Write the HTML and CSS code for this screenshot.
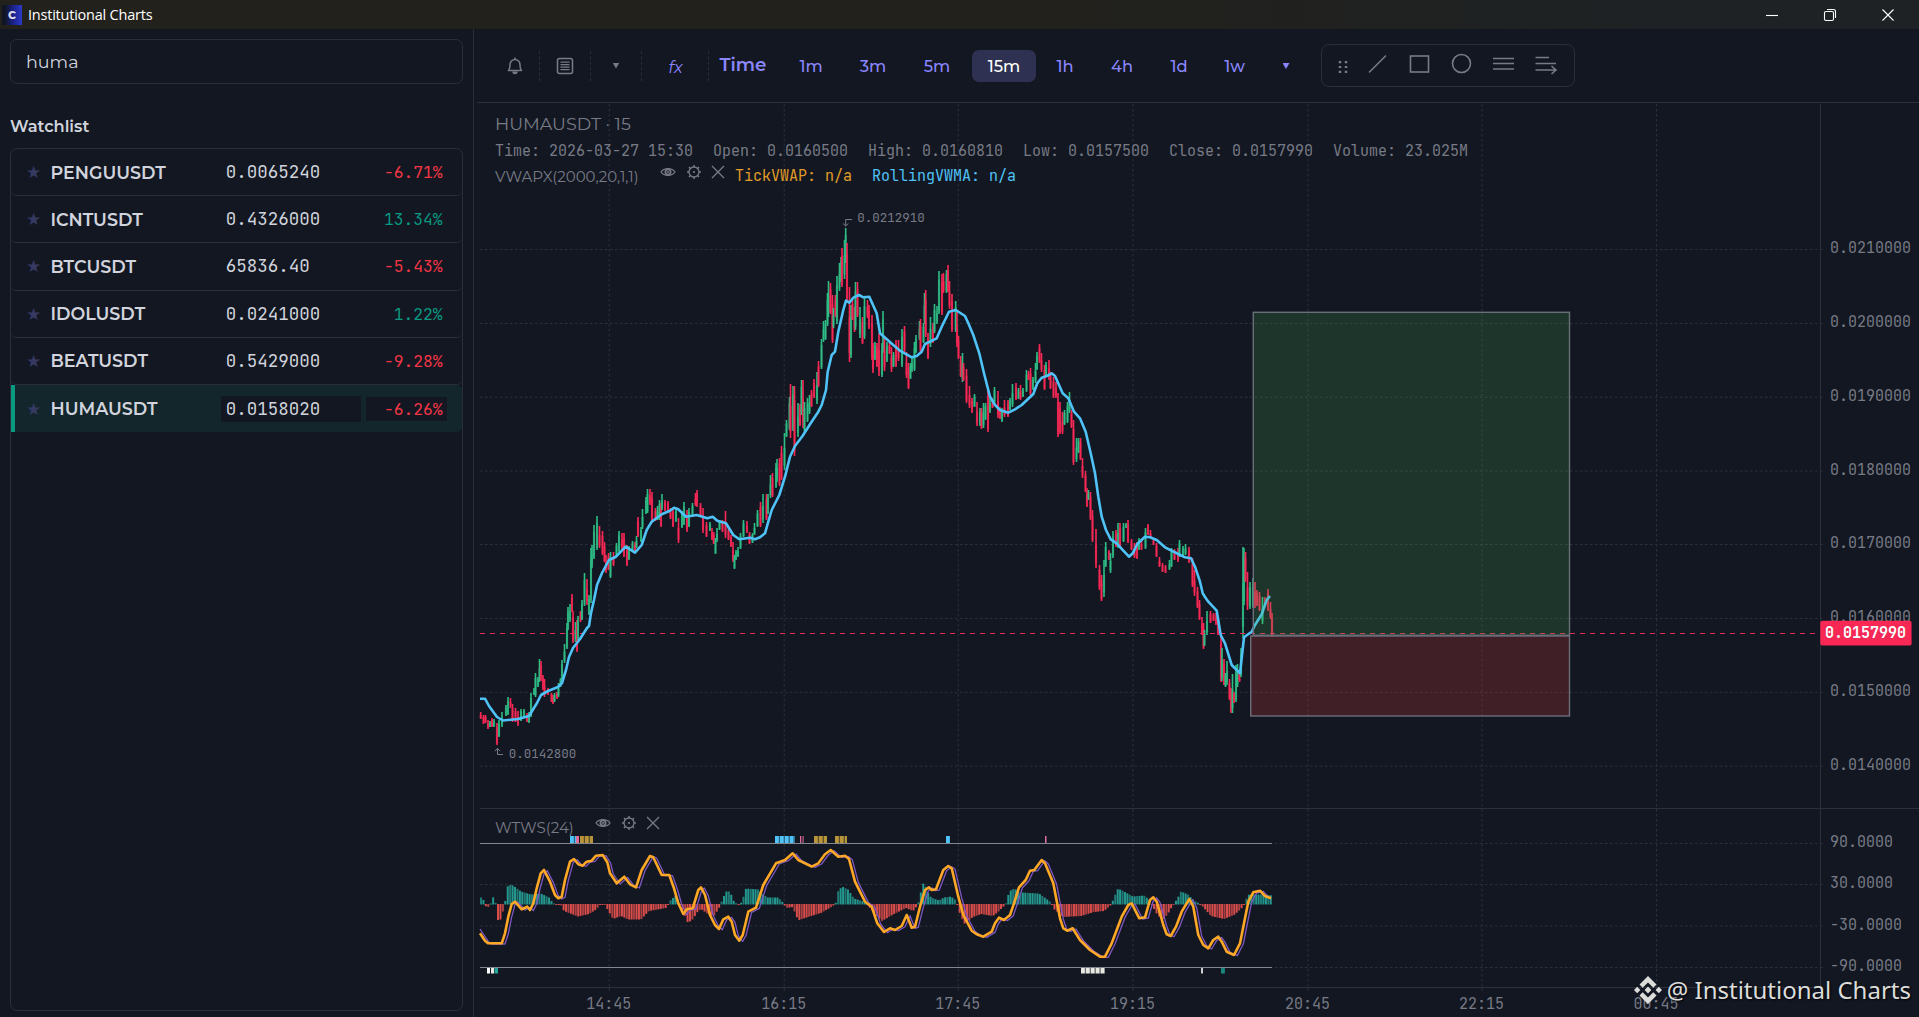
FILE: index.html
```
<!DOCTYPE html>
<html lang="en">
<head>
  <meta charset="UTF-8"/>
  <title>Institutional Charts</title>
  <link rel="stylesheet" href="styles.css">
</head>

<body>
<svg class="defs" width="0" height="0">
  <symbol id="eye" viewBox="0 0 16 12">
    <path d="M1 6C4 1.500 12 1.500 15 6C12 10.500 4 10.500 1 6Z" fill="none" stroke="currentColor" stroke-width="1.300"/>
    <circle cx="8" cy="6" r="2.600" fill="none" stroke="currentColor" stroke-width="1.800"/>
    <circle cx="8" cy="6" r="1" fill="currentColor"/>
  </symbol>
  <symbol id="gear" viewBox="0 0 14 14">
    <circle cx="7" cy="7" r="5" fill="none" stroke="currentColor" stroke-width="1.300"/>
    <circle cx="7" cy="7" r="1.100" fill="currentColor"/>
    <path d="M7 0V2M7 12V14M0 7H2M12 7H14M2 2L3.400 3.400M10.600 10.600L12 12M2 12L3.400 10.600M10.600 3.400L12 2" stroke="currentColor" stroke-width="1.400"/>
  </symbol>
  <symbol id="cross" viewBox="0 0 14 14">
    <path d="M1 1L13 13M13 1L1 13" stroke="currentColor" stroke-width="1.300"/>
  </symbol>
</svg>

<header class="titlebar">
  <span class="app-icon">C</span>
  <span class="app-title">Institutional Charts</span>
  <div class="window-controls">
    <svg viewBox="0 0 14 14"><path d="M1 7.500H13"/></svg>
    <svg viewBox="0 0 14 14"><rect x="1.500" y="3.500" width="9" height="9" rx="1.500"/><path d="M4 1.500H10.500Q12.500 1.500 12.500 3.500V10"/></svg>
    <svg viewBox="0 0 14 14"><path d="M1.500 1.500L12.500 12.500M12.500 1.500L1.500 12.500"/></svg>
  </div>
</header>

<div class="layout">
  <aside class="sidebar">
    <input class="search" type="text" value="huma"/>
    <h2>Watchlist</h2>
    <div class="watchlist">
      <div class="row"><span class="star">★</span><span class="symbol">PENGUUSDT</span><span class="price">0.0065240</span><span class="change down">-6.71%</span></div>
      <div class="row"><span class="star">★</span><span class="symbol">ICNTUSDT</span><span class="price">0.4326000</span><span class="change up">13.34%</span></div>
      <div class="row"><span class="star">★</span><span class="symbol">BTCUSDT</span><span class="price">65836.40</span><span class="change down">-5.43%</span></div>
      <div class="row"><span class="star">★</span><span class="symbol">IDOLUSDT</span><span class="price">0.0241000</span><span class="change up">1.22%</span></div>
      <div class="row"><span class="star">★</span><span class="symbol">BEATUSDT</span><span class="price">0.5429000</span><span class="change down">-9.28%</span></div>
      <div class="row active"><span class="star">★</span><span class="symbol">HUMAUSDT</span><span class="price">0.0158020</span><span class="change down">-6.26%</span></div>
    </div>
  </aside>

  <main class="workspace">
    <nav class="toolbar">
      <div class="tools">
        <span class="tool"><svg width="18" height="20" viewBox="0 0 18 20"><path d="M2.500 14.500H15.500C13.800 12.500 14 11 14 8.500A5 5 0 0 0 4 8.500C4 11 4.200 12.500 2.500 14.500ZM9 3.500V2" fill="none" stroke="currentColor" stroke-width="1.500" stroke-linejoin="round" stroke-linecap="round"/><path d="M6.300 15.500H11.700A2.700 2.700 0 0 1 6.300 15.500Z" fill="currentColor"/></svg></span>
        <span class="tool"><svg width="18" height="18" viewBox="0 0 18 18"><rect x="1.500" y="1.500" width="15" height="15" rx="2" fill="none" stroke="currentColor" stroke-width="1.500"/><path d="M4.500 5.200H13.500M4.500 7.700H13.500M4.500 10.200H13.500M4.500 12.700H13.500" stroke="currentColor" stroke-width="1.200"/></svg></span>
        <span class="tool"><i class="caret"></i></span>
        <span class="tool fx">fx</span>
      </div>
      <div class="intervals">
        <strong>Time</strong>
        <span>1m</span><span>3m</span><span>5m</span><span class="selected">15m</span><span>1h</span><span>4h</span><span>1d</span><span>1w</span><span><i class="caret"></i></span>
      </div>
      <div class="drawing">
        <svg width="252" height="42" viewBox="1322 45 252 42" fill="none" stroke="currentColor" stroke-width="1.600">
          <path d="M1340 61V73M1346 61V73" stroke-width="2.500" stroke-dasharray="2.200 2.700"/>
          <path d="M1369 72.500L1386 55.500"/>
          <rect x="1410.500" y="56" width="18" height="16"/>
          <circle cx="1461.500" cy="63.500" r="9"/>
          <path d="M1493 58.500H1514M1493 63.500H1514M1493 69H1514"/>
          <path d="M1535.500 57.500H1549M1535.500 63.500H1556M1535.500 70H1556M1551.500 66L1556 70L1551.500 74"/>
        </svg>
      </div>
    </nav>

    <section class="chart">
      <svg id="chart" viewBox="474 103 1445 914" width="1445" height="914"></svg>
      <div class="legend">
        <div class="pair">HUMAUSDT · 15</div>
        <div class="ohlc"><span>Time: 2026-03-27 15:30</span><span>Open: 0.0160500</span><span>High: 0.0160810</span><span>Low: 0.0157500</span><span>Close: 0.0157990</span><span>Volume: 23.025M</span></div>
        <div class="indicator">
          <span class="ind-name">VWAPX(2000,20,1,1)</span>
          <svg class="eye"><use href="#eye"/></svg><svg class="gear"><use href="#gear"/></svg><svg class="cross"><use href="#cross"/></svg>
          <span class="tick">TickVWAP: n/a</span><span class="rolling">RollingVWMA: n/a</span>
        </div>
      </div>
      <div class="legend legend-sub">
        <div class="indicator">
          <span class="ind-name">WTWS(24)</span>
          <svg class="eye"><use href="#eye"/></svg><svg class="gear"><use href="#gear"/></svg><svg class="cross"><use href="#cross"/></svg>
        </div>
      </div>
      <div class="watermark">
        <svg width="28" height="28" viewBox="0 0 28 28"><path d="M14 0L22.500 8.500L19.300 11.700L14 6.400L8.700 11.700L5.500 8.500ZM14 28L22.500 19.500L19.300 16.300L14 21.600L8.700 16.300L5.500 19.500ZM14 10.600L17.400 14L14 17.400L10.600 14ZM3.200 10.800L6.400 14L3.200 17.200L0 14ZM24.800 10.800L28 14L24.800 17.200L21.600 14Z" fill="currentColor"/></svg>
        <span>@ Institutional Charts</span>
      </div>
    </section>
  </main>
</div>
<script src="chart.js"></script>
</body>
</html>
```
FILE: styles.css
```
* {
  box-sizing: border-box;
}

body {
  margin: 0;
  height: 100vh;
  overflow: hidden;
  display: flex;
  flex-direction: column;
  background: #131722;
  color: #d1d4dc;
  font-family: Montserrat, Inter, sans-serif;
}

.defs {
  position: absolute;
}

/* title bar */
.titlebar {
  height: 29px;
  flex-shrink: 0;
  display: flex;
  align-items: center;
  background: linear-gradient(90deg, #22211c 0%, #22211c 55%, #1e2224 85%);
  color: #fff;
}

.app-icon {
  width: 20px;
  height: 20px;
  margin: 0 6px 0 2px;
  background: linear-gradient(90deg, #101525 15%, #1c2390 60%, #2b3cc8);
  color: #d8d8ee;
  font-size: 11px;
  font-weight: 800;
  line-height: 20px;
  text-align: center;
}

.app-title {
  font-family: "Segoe UI", "Open Sans", sans-serif;
  font-size: 14.500px;
  letter-spacing: -0.220px;
}

.window-controls {
  display: flex;
  margin-left: auto;
}

.window-controls svg {
  width: 14px;
  height: 14px;
  margin: 0 22px;
  fill: none;
  stroke: #fff;
  stroke-width: 1.100;
}

.window-controls svg:last-child {
  margin-right: 24px;
}

.layout {
  flex: 1;
  display: flex;
  min-height: 0;
}

/* sidebar */
.sidebar {
  width: 474px;
  border-right: 1px solid #2a2e39;
  padding: 10px 10px 6px;
  display: flex;
  flex-direction: column;
}

.search {
  height: 45px;
  flex-shrink: 0;
  padding: 0 15px;
  background: transparent;
  border: 1px solid #2a2e39;
  border-radius: 7px;
  color: #d1d4dc;
  font-family: inherit;
  font-size: 17.500px;
}

.sidebar h2 {
  margin: 32px 0 0;
  height: 32px;
  font-size: 16.250px;
  font-weight: 600;
  line-height: 21px;
}

.watchlist {
  flex: 1;
  border: 1px solid #2a2e39;
  border-radius: 7px;
}

.row {
  display: flex;
  align-items: center;
  height: 47.200px;
  padding: 0 15px 0 15px;
  border-bottom: 1px solid #2a2e39;
  border-radius: 5px;
}

.row.active {
  background: #12262b;
  border-bottom: none;
  box-shadow: inset 4px 0 #089981;
  border-radius: 0 5px 5px 0;
}

.star {
  width: 24.500px;
  color: #363a62;
  font-family: "DejaVu Sans", sans-serif;
  font-size: 17px;
}

.symbol {
  width: 171px;
  font-size: 17.500px;
  font-weight: 600;
}

.price,
.change {
  font-family: "JetBrains Mono", "DejaVu Sans Mono", monospace;
}

.price {
  width: 140px;
  height: 26px;
  margin-right: 5px;
  padding-left: 4.500px;
  font-size: 17.500px;
  line-height: 26px;
}

.change {
  width: 81px;
  height: 24px;
  padding-right: 4.500px;
  font-size: 16.250px;
  line-height: 24px;
  text-align: right;
}

.active .price,
.active .change {
  background: #131722;
}

.up {
  color: #089981;
}

.down {
  color: #f23645;
}

/* toolbar */
.workspace {
  width: 1445px;
}

.toolbar {
  display: flex;
  height: 74px;
  margin-left: 3px;
  padding-top: 15px;
  border-bottom: 1px solid #2a2e39;
  color: #787b86;
}

.tools {
  display: grid;
  grid-template-columns: 51px 51px 51px 67px;
  height: 30px;
  margin: 7px 0 0 12px;
}

.tool {
  display: flex;
  align-items: center;
  justify-content: center;
  border-right: 1px dashed #2a2e39;
}

.tool:first-child {
  padding-left: 2px;
}

.fx {
  color: #8a86ff;
  font-size: 16.250px;
  font-style: italic;
  padding: 1px 0 0 1px;
}

.caret {
  width: 7px;
  height: 6px;
  background: currentColor;
  clip-path: polygon(0 0, 100% 0, 50% 100%);
}

.tool .caret {
  margin-bottom: 1px;
}

.intervals {
  display: grid;
  grid-template-columns: 71px 62px 62px 66px 68px 54px 60px 54px 57px 46px;
  height: 32px;
  margin-top: 6px;
  color: #8a86ff;
  font-size: 16.250px;
  font-weight: 500;
}

.intervals strong {
  padding-left: 10.500px;
  font-size: 18.300px;
  font-weight: 600;
  line-height: 30px;
}

.intervals span {
  display: flex;
  align-items: center;
  justify-content: center;
}

.intervals .selected {
  margin: 0 2px;
  background: #2f3152;
  border-radius: 7px;
  color: #fff;
}

.drawing {
  width: 254px;
  height: 43px;
  margin-left: 12px;
  border: 1px solid #2a2e39;
  border-radius: 8px;
}

.drawing svg {
  display: block;
}

/* chart */
.chart {
  position: relative;
  height: 914px;
}

#chart {
  display: block;
}

#chart text {
  font-family: "JetBrains Mono", "DejaVu Sans Mono", monospace;
}

.legend {
  position: absolute;
  left: 21px;
  top: 10px;
  color: #787b86;
}

.legend-sub {
  top: 710px;
}

.pair {
  height: 26px;
  font-size: 17.500px;
  font-weight: 400;
  line-height: 22px;
}

.ohlc {
  display: flex;
  gap: 20px;
  height: 24px;
  font-family: "JetBrains Mono", "DejaVu Sans Mono", monospace;
  font-size: 15px;
  line-height: 24px;
}

.indicator {
  display: flex;
  align-items: center;
  height: 26px;
  font-family: "JetBrains Mono", "DejaVu Sans Mono", monospace;
  font-size: 15px;
}

.ind-name {
  width: 165px;
  font-family: Montserrat, Inter, sans-serif;
  font-size: 15px;
  font-weight: 400;
}

.legend-sub .ind-name {
  width: 100px;
  padding-top: 2px;
}

.indicator svg {
  height: 14px;
  margin-bottom: 8px;
}

.legend-sub .indicator svg {
  margin-bottom: 6px;
}

.indicator .eye {
  width: 16px;
  margin-right: 11px;
}

.indicator .gear {
  width: 14px;
  margin-right: 10px;
}

.indicator .cross {
  width: 14px;
  margin-right: 10px;
}

.tick {
  color: #e09c28;
  margin-right: 20px;
}

.rolling {
  color: #4fc3f7;
}

.watermark {
  position: absolute;
  right: 8px;
  bottom: 8px;
  display: flex;
  align-items: center;
  gap: 5px;
  color: #dcdddb;
  font-family: "Noto Sans", sans-serif;
  font-size: 24px;
  line-height: 38px;
  text-shadow: 1px 1px 2px #000;
}
```
FILE: chart.js
```
const svg = document.getElementById("chart");
let out = "";

const line = (x1, y1, x2, y2, color, extra = "") => {
  out += `<line x1="${x1}" y1="${y1}" x2="${x2}" y2="${y2}" stroke="${color}" ${extra}/>`;
};
const rect = (x, y, w, h, fill, extra = "") => {
  out += `<rect x="${x}" y="${y}" width="${w}" height="${h}" fill="${fill}" ${extra}/>`;
};
const text = (x, y, str, size, color = "#787b86", extra = "") => {
  out += `<text x="${x}" y="${y}" font-size="${size}" fill="${color}" ${extra}>${str}</text>`;
};
const pairs = (str) => str.trim().split(/\s+/).map((p) => p.split(",").map(Number));
const poly = (pts, color, width) => {
  out += `<polyline points="${pts.join(" ")}" fill="none" stroke="${color}" stroke-width="${width}" stroke-linejoin="round"/>`;
};

// grid
const GRID = "#2c303b";
const DASH = 'stroke-dasharray="2.5 2.5"';
const times = [[609.2, "14:45"], [784.2, "16:15"], [958.2, "17:45"], [1133, "19:15"], [1308, "20:45"], [1482, "22:15"], [1656.5, "00:45"]];
const prices = [[249.5, "0.0210000"], [323.5, "0.0200000"], [397.2, "0.0190000"], [471, "0.0180000"], [544.5, "0.0170000"], [618.5, "0.0160000"], [692.4, "0.0150000"], [766.2, "0.0140000"]];
const levels = [[843.5, "90.0000"], [884.5, "30.0000"], [926, "-30.0000"], [967.5, "-90.0000"]];

times.forEach(([x]) => {
  line(x, 104, x, 987, GRID, DASH);
  line(x, 987, x, 991, GRID);
});
prices.concat(levels).forEach(([y]) => line(480, y, 1825, y, GRID, DASH));
line(480, 808.5, 1919, 808.5, GRID);
line(480, 987.5, 1820, 987.5, GRID);
line(1820.5, 104, 1820.5, 987, GRID);

// candles: x, high, low, 1 = up
const candles = pairs(`
480.7,712,719,0 483.5,715,724,0 485.5,715,723,0 488,720,729,0 490,721,727,1 492,718,727,0 494,719,727,1 497,723,745,0 499,720,737,1 502,712,727,1
506,705,716,1 508,697,715,1 510.5,698,708,0 512.5,704,722,0 515.5,708,722,0 518,711,726,0 521,709,721,1 524,709,718,1 527,713,722,0 529,712,723,1
531,693,717,1 534,688,695,1 535.5,673,697,1 538,677,687,1 539.5,659,682,1 541,661,681,0 543,675,690,0 544.5,679,697,0 548,688,695,0 551.5,693,702,0
553,695,704,0 554.5,693,702,1 557,692,699,0 558.5,683,697,1 560.5,678,687,1 562,660,680,1 564.5,644,663,1 567,623,649,1 568,607,630,1 570,604,622,1
572,594,612,0 573,611,643,0 575.5,622,642,1 577,620,652,0 578,616,640,1 580.5,611,622,0 582,600,620,1 584.5,573,606,1 587,579,605,0 589,595,615,1
591,548,603,1 592,545,568,1 594,525,559,1 597,516,550,1 599.5,526,548,0 602.5,531,555,0 604.5,542,562,0 606,555,573,0 608.5,553,570,0 610.5,552,578,1
613.5,552,566,0 616.5,543,557,1 619,531,552,1 622,533,550,0 624,533,557,0 627,545,566,0 629,546,560,1 632.5,541,552,1 635,542,551,0 636.5,536,548,1
638,517,537,0 641,527,542,1 642.5,509,529,1 646,497,514,1 647.5,489,513,1 650,489,505,0 652,492,523,0 655.5,508,521,0 657.5,506,520,1 659.5,500,520,1
661,503,527,0 662,494,510,1 665,500,511,0 668,501,513,0 670.5,508,519,0 673,508,527,0 676,508,522,1 678.5,518,543,0 682,511,528,1 684,502,525,1
687,510,532,0 689,508,527,1 692.5,503,517,1 695.5,493,506,0 697,490,507,0 700.5,503,517,0 703,508,533,0 706.5,522,537,0 710,522,531,1 712,528,540,0
713.7,532,544,0 715.5,538,554,1 717,528,542,1 719.5,520,530,1 722.5,520,532,0 725.5,511,538,0 728.5,528,540,0 731,535,547,0 733,542,562,0 734.5,555,569,1
736,550,560,1 738,547,557,1 740.5,533,549,1 743.5,520,537,1 747,521,533,0 749.5,532,544,0 752.5,533,543,1 754.5,523,535,1 757.5,510,527,1 760.5,502,527,0
763,494,523,1 766.5,494,520,0 768,494,514,1 770.5,475,498,1 772.5,473,497,0 776,463,488,1 777,459,482,1 779.5,458,486,0 781.5,446,480,0 784.5,433,470,1
786.5,420,437,1 789.5,397,430,1 790.5,384,438,0 793,386,431,1 794.5,386,456,0 798,403,437,1 800,404,426,0 801.5,380,415,1 803,380,428,0 804.5,402,432,1
807.5,398,422,1 809.5,395,414,1 811.5,390,407,0 814,379,398,0 817,372,404,1 818.5,361,387,0 821.5,339,369,1 823.5,321,342,1 825.5,320,340,1 827.5,293,326,1
828.5,281,317,1 830.5,283,314,0 832.5,295,343,0 833.5,308,328,1 835.5,295,317,0 837,276,324,1 839.5,263,291,1 841,257,282,1 842,248,287,0 844.5,240,279,1
845.7,228,263,1 847,243,302,0 849.5,287,362,0 851,305,358,1 852.5,300,320,0 854.5,307,332,0 855.5,282,330,1 857.5,282,317,0 860,307,338,1 862.5,317,344,0
864.5,298,339,1 867.5,300,318,0 869,305,329,0 872,315,360,0 873,343,373,0 875,342,360,1 877,343,367,0 879,333,376,0 882,343,377,1 883,311,353,1
884.5,337,371,0 887,342,362,1 889.5,343,354,0 891.5,347,372,0 893.5,352,367,1 896,340,367,0 898.5,340,361,0 902,329,367,1 904.5,326,352,0 906.5,352,378,0
908.5,363,389,0 910.5,363,379,1 912,357,372,1 914.5,342,371,1 916,335,353,1 919.5,321,340,1 920.5,319,352,0 923.5,323,343,1 924.5,293,324,1 925.7,290,337,0
928,333,359,0 930.5,317,347,1 933,323,343,0 934.5,304,333,1 937,306,324,1 939,271,314,1 942,274,315,0 943.5,273,293,0 946.5,270,293,1 948,265,292,0
949.5,281,309,0 952,294,332,0 955.7,301,332,1 957,312,347,0 958.5,336,359,0 960.7,356,377,0 962.5,353,382,1 963.5,363,381,0 966.5,369,403,0 969.5,386,408,0
972,398,413,0 974.5,394,407,1 977,402,426,0 980,408,426,1 981.5,408,429,0 983.5,403,428,1 985.5,403,420,1 988,387,432,0 990,397,413,1 992.5,398,408,0
994.5,387,403,1 998,391,418,0 1000,407,419,0 1002,408,422,1 1004.5,400,417,0 1008,400,417,0 1010,398,410,1 1012.5,384,407,1 1016,383,400,0 1018.5,388,399,1
1020.5,385,400,0 1023,388,397,1 1026.5,370,392,1 1028.5,371,380,0 1030.5,368,395,0 1033,377,390,1 1035.5,363,383,1 1037,352,370,1 1039.5,344,363,0 1041.5,353,372,0
1044.5,365,390,0 1046,362,377,1 1049,360,380,0 1050.5,372,389,0 1053.5,377,398,0 1056,382,398,0 1058,393,437,0 1060,402,434,0 1062.5,412,434,0 1064.5,410,425,1
1067.5,402,423,1 1069.5,392,413,1 1071.5,410,428,0 1073.5,420,465,0 1076.5,438,462,1 1078.5,438,453,1 1080.5,438,460,0 1082.5,458,478,0 1085.5,471,492,0 1087,488,507,0
1088.5,490,500,1 1090.5,492,520,0 1092.5,510,542,0 1096,529,568,0 1099.5,565,590,0 1101.5,575,601,0 1104,560,597,1 1105.7,542,567,1 1109,550,560,0 1110.5,553,573,1
1113,531,558,1 1116,530,547,0 1118,523,548,1 1120,523,547,0 1123.5,523,542,1 1126,523,528,1 1128,520,543,0 1131.5,539,550,0 1134.5,543,558,0 1137,542,559,0
1139,538,550,1 1141.5,540,550,0 1145.5,528,549,1 1148,524,535,0 1150.5,530,538,0 1153.5,540,545,0 1156.5,543,557,0 1159.5,557,567,0 1162.5,563,572,0 1165.5,565,573,0
1169.5,560,570,1 1171.5,548,567,1 1174.5,549,560,0 1178,548,562,0 1179.5,540,557,1 1183,546,557,1 1185.5,544,555,1 1189,547,563,0 1192.5,558,587,0 1194.5,570,596,0
1197.5,587,608,0 1199.5,600,620,0 1202,617,635,0 1203.5,623,649,0 1204.5,630,646,1 1207,611,635,1 1210.5,611,623,0 1213.5,613,621,0 1216,613,625,0 1218,620,635,0
1221,633,682,0 1222,648,681,1 1224,659,685,0 1225.5,673,687,1 1227,661,685,1 1229.5,679,700,0 1231,688,713,0 1232.5,674,713,1 1234,692,703,0 1236,665,702,1
1237.5,664,687,1 1239.5,672,682,0 1241,648,677,1 1243,547,638,1 1244,548,605,1 1245.5,552,582,0 1247.5,572,610,0 1250,582,609,1 1253,578,608,1 1255,582,608,0
1257,590,606,0 1259.5,592,611,0 1262.5,597,624,1 1265,597,607,0 1268,589,611,0 1270.5,602,619,0 1272,613,637,0`);
candles.forEach(([x, hi, lo, up], i) => {
  const color = up ? "#2ebd85" : "#f92855";
  rect(x - 0.8, hi, 1.6, lo - hi, color);
  // body slightly wider than the wick
  const cut = (lo - hi) * (i % 3 ? 0.2 : 0.4);
  rect(x - 1.1, hi + cut, 2.2, lo - hi - cut * 1.3, color, 'opacity="0.6"');
});

// last price line
line(480, 633.5, 1818, 633.5, "#e42b52", 'stroke-dasharray="5 5"');

// moving average
poly(pairs(`
480,698.7 485,698.7 489,706 497,717 503,720.5 518,719 529,716 537,703 541,695 548,691 558,687 562,683 566,670 569,657 573,648 580,639 587,628 589,626 591,613 594,600 597,585 602,573 609,560
616,556.7 625.7,546.7 635,552.7 641.7,545 646.7,530 651.7,521.7 661.7,514.3 670,510.7 674,507.7 678.3,509.3 686,516.7 696.7,515 707.3,518.3 712.7,516.7 717.3,520.7 726,523.3 733.3,535 739.3,539.3 750,537.7 755,539.3 760,537.3 765,533.3
768.3,521.7 771.7,510 779.3,495 785,476.7 790,456.7 795,446 802.7,435.7 810,424.3 818.3,411.7 821.7,405 826,390 827.7,371.7 831.7,355 835,351.7 838.3,331.7 843.3,310 846,300.7 849.3,302.7 853.3,297.7 859,295 863.3,297.3 869.3,296.7
876.7,313.3 880,333.3 893.3,345 900,350.7 911.7,357.3 916.7,356 921.7,351.7 925,344 936.7,338.3 941.7,326.7 949,311.7 955.7,310 965,316 968.3,323.3 973.3,335 979.3,353.3 984,373.3 990,396.7 995,405 1000,410 1008.3,412.7 1015,409.3 1021.7,405
1033.3,394 1037.3,383.3 1041.7,377.7 1046.7,376 1051.7,373.3 1055,376 1062.7,393.3 1068.3,398.3 1074,411.7 1080,418.3 1085.7,431.7 1090.7,453.3 1095,473.3 1098.3,496.7 1101.7,516.7 1106,530 1110.7,539.3 1116.7,543.3 1123.3,550.7 1129,556.7
1132.7,553.3 1137.3,544 1145,536.7 1150,537.3 1156.7,540 1165,547.3 1178.3,554 1185,557.3 1191,558.3 1195,566.7 1200,581.7 1202.7,593.3 1205,597 1208.3,601.7 1216.7,610.7 1220.7,635 1225,643.3 1231.7,665 1240,673.3 1244,637.3 1251.7,631.7 1255,625 1261.7,614.3 1266.7,600 1270,596`), "#4fc3f7", 2.6);

// position box
rect(1253.3, 312.3, 316.2, 323, "rgba(76,175,80,.2)", 'stroke="#6b6f7b" stroke-width="1.4"');
rect(1250.7, 636, 318.8, 80, "rgba(244,67,54,.2)", 'stroke="#6b6f7b" stroke-width="1.4"');

// high / low marks
out += '<path d="M852 219.500H845.700V226M843 223.500L845.700 226L848.400 223.500" fill="none" stroke="#787b86"/>';
text(857.3, 222, "0.0212910", 12.5);
out += '<path d="M503 754.500H497.500V748M494.800 751L497.500 748.500L500.200 751" fill="none" stroke="#787b86"/>';
text(508.8, 758, "0.0142800", 12.5);

// histogram: x, value
const hist = pairs(`
480,7 484,3 485,-3 489,-3 491,6 494,9 495.5,-10 498,-20 501.5,-9 503,-3 505,7 507,20 512,19 520,13 530,10 540,11 548,7 553,0 560,-1 563,-7 577,-12.5 588,-10 596,-5 598,-1 604,-1 612,-15 620,-12 627,-15.5 640,-15.5 648,-7 665,-4
670,5 675,9 678,3 682,-7 687,-19 692,-15 697,-7 700,-5 707,-10 713,-12 718,-4 721,4 725,13 729,13 733,3 738,-1 741,3 745,16 758,15 762,10 767,7 777,7 782,2 785,-4 792,-3 795,-12 798,-16 807,-13 820,-9 832,-2 835,2 837,13 841,18 847,15 853,6 863,3 867,-2 872,-7 877,-13 881,-17
893,-10 905,-4 912,-7 916,-2 919,7 921,19 923,22 927,12 930,7 938,4 943,7 950,8 955,4 958,-7 963,-20 972,-13 980,-10 992,-12 997,-8 1003,-2 1006,3 1008,13 1013,16 1020,12 1038,11 1045,6 1050,2 1053,-5 1062,-13 1080,-12 1093,-8 1103,-7 1110,-1 1113,7 1117,16 1123,13 1132,8 1143,9
1148,5 1152,-3 1157,-12 1163,-15 1168,-8 1172,-1 1177,7 1180,13 1187,10 1193,4 1198,1 1202,-3 1210,-12 1223,-15 1233,-11 1240,-5 1243,-1 1245,5 1248,10 1260,10 1273,9`);
let n = 0;
for (let x = 480, i = 0; x < 1272; x += 2.43, i++) {
  while (n < hist.length - 2 && hist[n + 1][0] <= x) n++;
  const [x0, v0] = hist[n];
  const [x1, v1] = hist[n + 1];
  const v = v0 + (v1 - v0) * (x - x0) / (x1 - x0);
  const h = Math.max(Math.abs(v), 1);
  rect(x, v > 0 ? 904.5 - h : 904, 2, h, v > 0 ? "#26a69a" : "#ef5350", `opacity="${i % 3 ? 0.9 : 0.7}"`);
}

// overbought / oversold bands
line(480, 843.5, 1272, 843.5, "#85878f");
line(480, 967.5, 1272, 967.5, "#85878f");
const marks = (x0, x1, y, h, color) => {
  for (let x = x0; x < x1; x += 4.9) {
    const w = Math.min(3.9, x1 - x);
    rect(x, y, w, h, color);
    rect(x + w, y, Math.min(1, Math.max(0, x1 - x - w)), h, color, 'opacity="0.4"');
  }
};
marks(570, 576, 836, 7, "#4fc3f7");
marks(576, 579, 836, 7, "#e06c9a");
marks(580, 593, 836, 7, "#b8943a");
marks(775, 795, 836, 7, "#4fc3f7");
marks(800, 801.3, 836, 7, "#e06c9a");
marks(802.3, 804, 836, 7, "#8d4a66");
marks(814, 827, 836, 7, "#b8943a");
marks(835, 847, 836, 7, "#b8943a");
marks(946, 950, 836, 7, "#4fc3f7");
marks(1045, 1046.5, 836, 7, "#e06c9a");
marks(487, 490, 968, 5.5, "#ffffff");
marks(491, 494, 968, 5.5, "#e8e8e2");
marks(494.5, 498, 968, 5.5, "#26a69a");
marks(1081, 1105, 968, 5.5, "#e8e8e2");
marks(1201, 1203, 968, 5.5, "#d0d0d0");
marks(1221, 1225, 968, 5.5, "#1c867e");

// oscillator and its signal line
const wt = pairs(`
480,933.3 485,940.7 488,943.3 501.7,943.3 505,933.3 508.3,916.7 511.7,904 515,901.7 521.7,909.3 527.3,906.7 530,910 533.3,903.3 536.7,888.3 540.7,873.3 544,870 550,881.7 555,895 558.3,898.3 561.7,896.7 565,880 570,861.7 574,859 578.3,864.3 582.7,865.7 586.7,861.7 591.7,860.7 596,855.7
602.7,855 607.3,862.3 610,873.3 616.7,883.3 624.3,876.7 630,884.3 636,887.3 641.7,870 650,856 653.3,857.3 661.7,875 669.3,875 674,888.3 678.3,903.3 683.3,914 686.7,909.3 692.7,908.3 698.3,890 701,887.3 705,895 710,915 715,925 719,929 723.3,919.3 728.3,916.7 731.7,921.7 735,935 739.3,940.7
742.7,935 748.3,911.7 756,907.7 763.3,885 776,863.3 785,860 792.7,853.3 798.3,860 811.7,866.7 818.3,863.3 825,854.3 830.7,850 838.3,856.7 845,855.7 849,859 855,881.7 865,901.7 871.7,906.7 877.3,923.3 884,932 890,928.3 895,930 901.7,926 906.7,915 911.7,927.7 915,926.7
920,906.7 925,890 929,887.3 931.7,890 936,889.3 943.3,870 948.3,866 951.7,868.3 958.3,896.7 963.3,915 971.7,930.7 976.7,934.3 983.3,936.7 991.7,931.7 995,923.3 999,917.7 1004,920 1010,915 1014,903.3 1019,887.3 1025.7,880 1030,870.7 1034.3,870 1041.7,860 1045,863.3 1053.3,883.3 1060,918.3 1063.3,928.3
1067.3,930.7 1072.7,928.3 1080,940 1090,950 1100,956.7 1105,956.7 1111.7,943.3 1121.7,916.7 1128.3,905 1131.7,903.3 1139.3,918.3 1145,917.3 1150,900 1153.3,897.3 1156.7,901.7 1163.3,925 1166.7,934.3 1170.7,936 1176,926.7 1181.7,911.7 1189.3,899 1193.3,906.7 1198.3,935 1203.3,945 1208.3,948.3
1213.3,940 1218.3,936.7 1221.7,941.7 1226.7,951.7 1234,955 1240,943.3 1244,923.3 1248.3,901.7 1253.3,892.3 1260,890.7 1265,896 1271,898.3`);
const signal = wt.map(([x, y]) => [x + 3.3, y + 0.7]).filter(([x]) => x < 1273);
poly([[480, 929], ...signal], "#7e57c2", 1.3);
poly(wt, "#ffa726", 2.6);

// axis labels
prices.forEach(([y, s]) => text(1830, Math.round(y + 3.5), s, 15));
levels.forEach(([y, s]) => text(1830, Math.round(y + 3.5), s, 15));
times.forEach(([x, s]) => text(x - 0.5, 1008.5, s, 15, "#787b86", 'text-anchor="middle"'));

// last price tag
rect(1820.3, 620.7, 91.3, 24.8, "#f92855", 'rx="2"');
text(1825, 637.5, "0.0157990", 15, "#ffffff", 'font-weight="bold"');

svg.innerHTML = out;
```
